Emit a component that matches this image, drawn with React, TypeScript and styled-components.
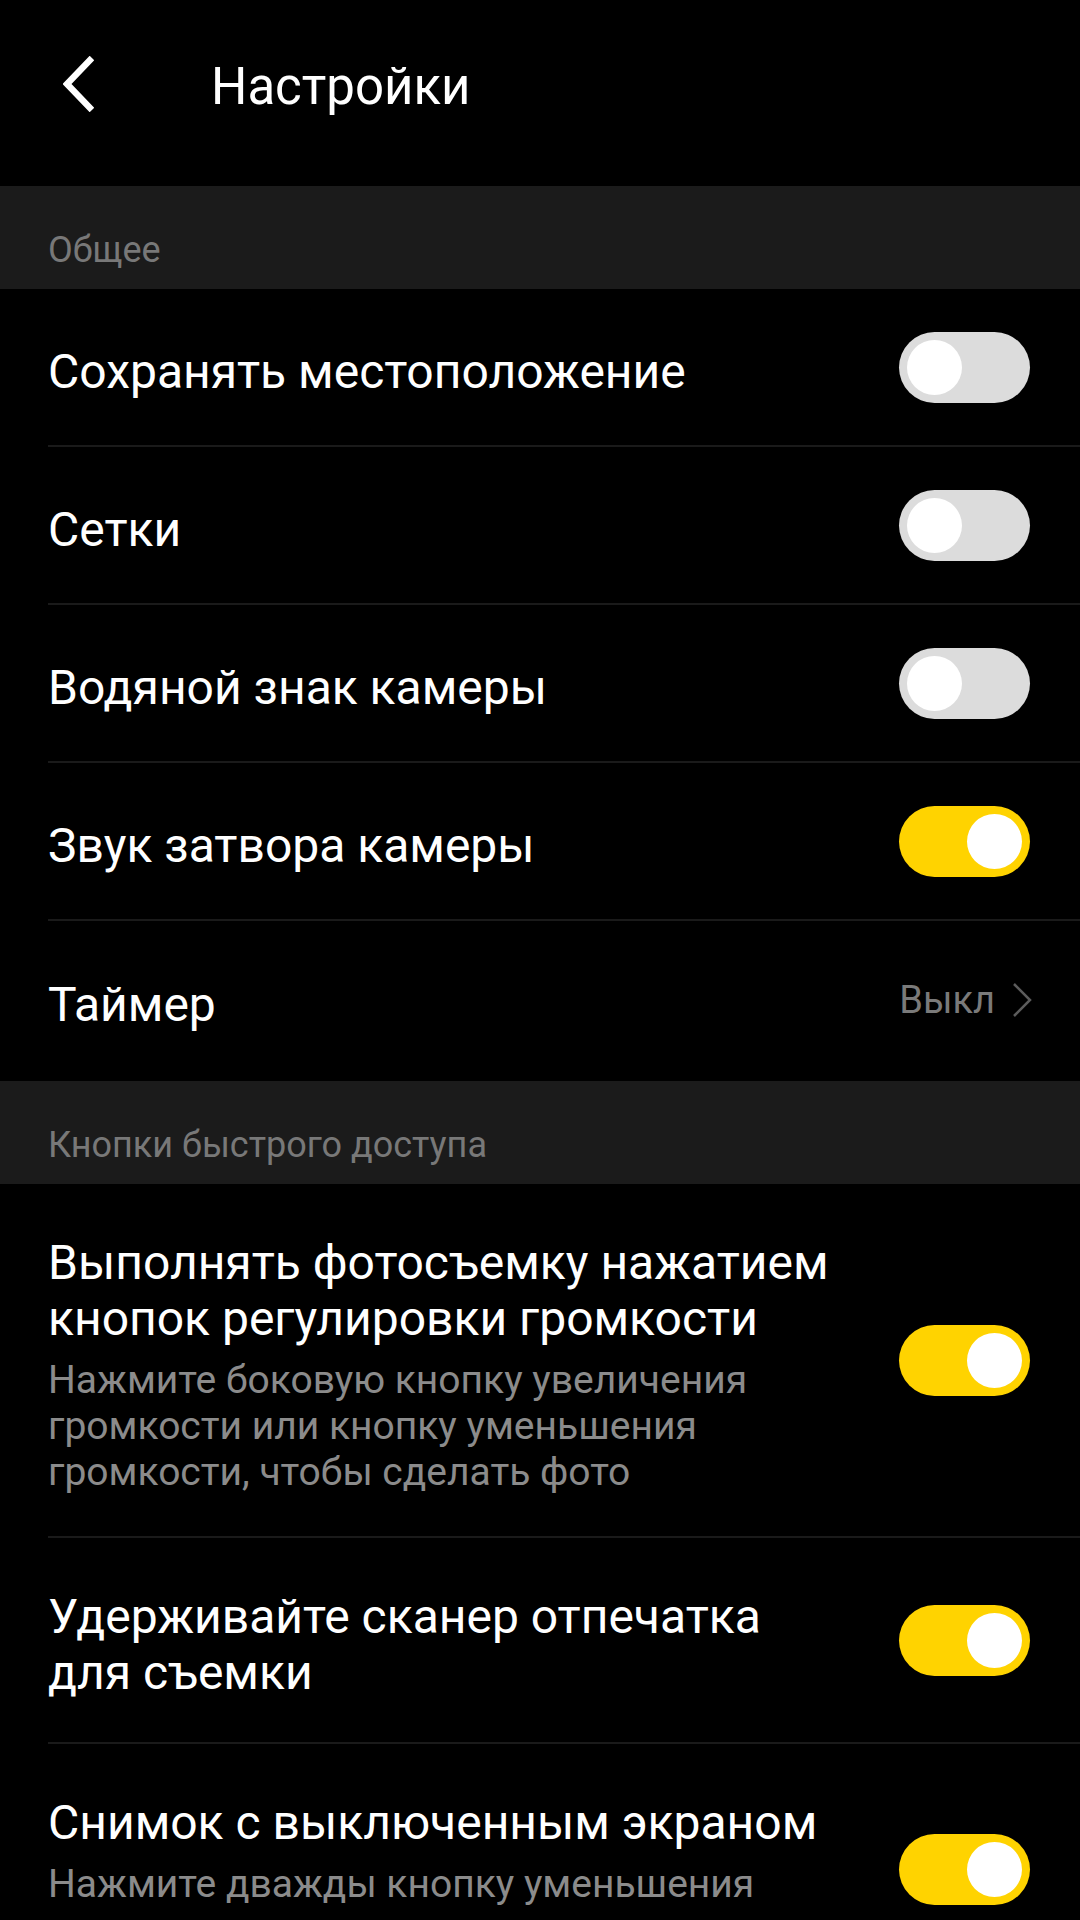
import * as React from 'react';
import styled, { createGlobalStyle } from 'styled-components';

interface ToggleItem {
  kind: 'toggle';
  title: string;
  subtitle?: string;
  on: boolean;
}

interface ValueItem {
  kind: 'value';
  title: string;
  value: string;
}

type Item = ToggleItem | ValueItem;

interface Section {
  name: string;
  items: Item[];
  closed?: boolean;
}

const sections: Section[] = [
  {
    name: 'Общее',
    closed: true,
    items: [
      { kind: 'toggle', title: 'Сохранять местоположение', on: false },
      { kind: 'toggle', title: 'Сетки', on: false },
      { kind: 'toggle', title: 'Водяной знак камеры', on: false },
      { kind: 'toggle', title: 'Звук затвора камеры', on: true },
      { kind: 'value', title: 'Таймер', value: 'Выкл' },
    ],
  },
  {
    name: 'Кнопки быстрого доступа',
    items: [
      {
        kind: 'toggle',
        title: 'Выполнять фотосъемку нажатием кнопок регулировки громкости',
        subtitle:
          'Нажмите боковую кнопку увеличения громкости или кнопку уменьшения громкости, чтобы сделать фото',
        on: true,
      },
      { kind: 'toggle', title: 'Удерживайте сканер отпечатка для съемки', on: true },
      {
        kind: 'toggle',
        title: 'Снимок с выключенным экраном',
        subtitle: 'Нажмите дважды кнопку уменьшения громкости при выключенном экране',
        on: true,
      },
    ],
  },
];

const GlobalStyle = createGlobalStyle`
  html, body {
    margin: 0;
    padding: 0;
    background: #000;
  }
  body {
    font-family: Roboto, "Noto Sans", sans-serif;
    -webkit-font-smoothing: antialiased;
  }
`;

const Page = styled.div`
  width: 1080px;
  height: 1920px;
  overflow: hidden;
  background: #000;
  color: #fff;
`;

const Header = styled.header`
  height: 186px;
  box-sizing: border-box;
  padding: 0 0 18px 63px;
  display: flex;
  align-items: center;
`;

const BackButton = styled.button`
  width: 31px;
  height: 56px;
  padding: 0;
  border: none;
  background: none;
  display: flex;
  align-items: center;
  justify-content: center;
`;

const Title = styled.h1`
  margin: 6px 0 0 117px;
  font-size: 51px;
  font-weight: 400;
  line-height: 60px;
  color: #fff;
`;

const SectionHeader = styled.div`
  height: 103px;
  box-sizing: border-box;
  background: #1b1b1b;
  padding: 0 0 19px 48px;
  display: flex;
  align-items: flex-end;
  font-size: 36px;
  line-height: 40px;
  color: #787878;
`;

const Row = styled.div<{ $last: boolean }>`
  margin-left: 48px;
  min-height: ${(p) => (p.$last ? 160 : 158)}px;
  box-sizing: border-box;
  padding-right: 50px;
  display: flex;
  align-items: center;
  border-bottom: 2px solid ${(p) => (p.$last ? 'transparent' : '#1a1a1a')};
`;

const TextBlock = styled.div`
  flex: 1;
  min-width: 0;
  max-width: 792px;
  margin-right: auto;
  padding: 51px 0 41px;
`;

const RowTitle = styled.div`
  font-size: 48px;
  line-height: 56px;
  color: #fff;
`;

const RowSubtitle = styled.div`
  margin-top: 10px;
  font-size: 39px;
  line-height: 46px;
  color: #8b8b8b;
`;

const Track = styled.div<{ $on: boolean }>`
  flex: none;
  width: 131px;
  height: 71px;
  box-sizing: border-box;
  padding: 8px;
  border-radius: 36px;
  background: ${(p) => (p.$on ? '#ffd300' : '#dcdcdc')};
  display: flex;
  justify-content: ${(p) => (p.$on ? 'flex-end' : 'flex-start')};
  align-items: center;
`;

const Knob = styled.div`
  width: 55px;
  height: 55px;
  border-radius: 50%;
  background: #fff;
`;

const ValueBox = styled.div`
  flex: none;
  display: flex;
  align-items: center;
  gap: 16px;
  margin-right: -3px;
  font-size: 38px;
  line-height: 46px;
  color: #7a7a7a;
`;

const Toggle: React.FC<{ on: boolean }> = ({ on }) => (
  <Track $on={on}>
    <Knob />
  </Track>
);

const BackIcon = () => (
  <svg width="31" height="56" viewBox="0 0 31 56">
    <path d="M29 2 L4 28 L29 54" fill="none" stroke="#fff" strokeWidth="6.5" />
  </svg>
);

const ChevronRight = () => (
  <svg width="22" height="36" viewBox="0 0 22 36">
    <path d="M3 2 L19 18 L3 34" fill="none" stroke="#5c5c5c" strokeWidth="2.5" />
  </svg>
);

export default function App() {
  return (
    <Page>
      <GlobalStyle />
      <Header>
        <BackButton aria-label="Назад">
          <BackIcon />
        </BackButton>
        <Title>Настройки</Title>
      </Header>
      {sections.map((section) => (
        <React.Fragment key={section.name}>
          <SectionHeader>{section.name}</SectionHeader>
          {section.items.map((item, i) => (
            <Row key={item.title} $last={!!section.closed && i === section.items.length - 1}>
              <TextBlock>
                <RowTitle>{item.title}</RowTitle>
                {item.kind === 'toggle' && item.subtitle && <RowSubtitle>{item.subtitle}</RowSubtitle>}
              </TextBlock>
              {item.kind === 'toggle' ? (
                <Toggle on={item.on} />
              ) : (
                <ValueBox>
                  {item.value}
                  <ChevronRight />
                </ValueBox>
              )}
            </Row>
          ))}
        </React.Fragment>
      ))}
    </Page>
  );
}
